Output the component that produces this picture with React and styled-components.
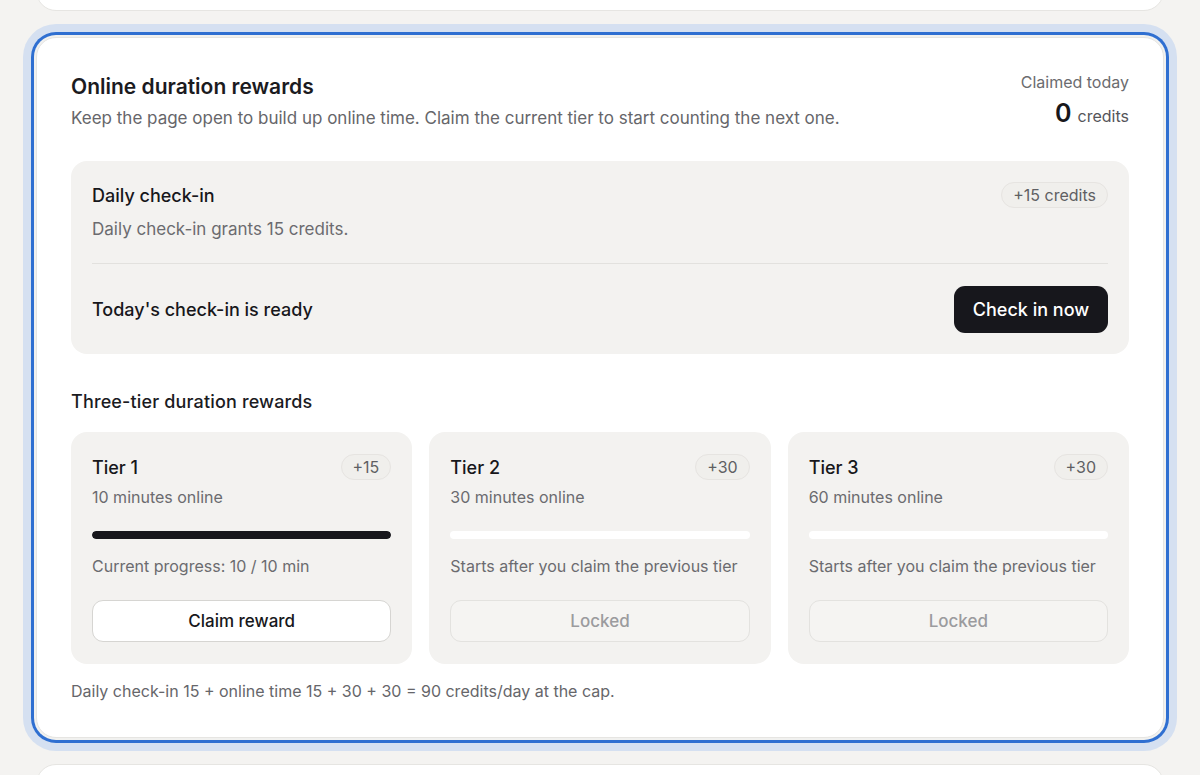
import React from 'react'
import styled, { createGlobalStyle } from 'styled-components'

const GlobalStyle = createGlobalStyle`
  body {
    margin: 0;
    background: #f4f3f1;
    font-family: Inter, "Noto Sans", "Liberation Sans", sans-serif;
    color: #1b1b1f;
    -webkit-font-smoothing: antialiased;
  }
`

const Page = styled.div`
  display: flex;
  flex-direction: column;
  gap: 26px;
  padding: 0 36px;
  overflow: hidden;
  height: 775px;
  box-sizing: border-box;
`

const GhostCard = styled.div`
  flex: none;
  height: 40px;
  margin-top: ${props => props.top ? '-31px' : '0'};
  background: #fff;
  border: 1px solid #e6e5e2;
  border-radius: 20px;
`

const Card = styled.section`
  flex: none;
  background: #fff;
  border: 1px solid #e6e5e2;
  border-radius: 20px;
  padding: 35px 34px 35px;
  box-shadow: 0 0 0 2px #f1f1ef, 0 0 0 5px #2f6fd1, 0 0 0 13px #d5e0f1;
`

const Header = styled.div`
  display: flex;
  justify-content: space-between;
  align-items: flex-start;
`

const Title = styled.h2`
  margin: 0;
  font-size: 21px;
  line-height: 28px;
  font-weight: 600;
`

const Subtitle = styled.p`
  margin: 5px 0 0;
  font-size: 17px;
  line-height: 24px;
  color: #66666a;
`

const Claimed = styled.div`
  text-align: right;
  margin-top: -2px;
`

const ClaimedLabel = styled.div`
  font-size: 16px;
  line-height: 22px;
  color: #6b6b6f;
`

const ClaimedValue = styled.div`
  margin-top: 6px;
  font-size: 16px;
  line-height: 28px;
  color: #55555a;
  b {
    font-size: 25px;
    font-weight: 600;
    color: #17171b;
    margin-right: 6px;
  }
`

const Panel = styled.div`
  margin-top: 31px;
  background: #f3f2f0;
  border-radius: 16px;
  padding: 22px 21px 21px;
`

const Row = styled.div`
  display: flex;
  justify-content: space-between;
  align-items: ${props => props.center ? 'center' : 'flex-start'};
`

const Name = styled.div`
  font-size: 18px;
  line-height: 26px;
  font-weight: 500;
  color: #17171b;
`

const Muted = styled.div`
  margin-top: ${props => props.gap || 0}px;
  font-size: ${props => props.large ? 17 : 16}px;
  line-height: 24px;
  color: #6b6b6f;
  white-space: nowrap;
`

const Badge = styled.span`
  display: inline-flex;
  align-items: center;
  height: 24px;
  padding: 0 11px;
  margin-top: ${props => props.offset || 0}px;
  border: 1px solid #e6e4e1;
  border-radius: 999px;
  background: #f0efec;
  font-size: 16px;
  color: #5f5f63;
`

const Divider = styled.hr`
  margin: 22px 0;
  border: none;
  border-top: 1px solid #e2e1de;
`

const DarkButton = styled.button`
  height: 47px;
  width: 154px;
  border: none;
  border-radius: 11px;
  background: #17171c;
  color: #fff;
  font-family: inherit;
  font-size: 18px;
  font-weight: 500;
`

const SectionTitle = styled.h3`
  margin: 35px 0 17px;
  font-size: 18px;
  line-height: 26px;
  font-weight: 500;
  letter-spacing: 0.15px;
`

const Tiers = styled.div`
  display: grid;
  grid-template-columns: repeat(3, 1fr);
  gap: 17px;
`

const Tier = styled.div`
  background: #f3f2f0;
  border-radius: 16px;
  padding: 23px 21px 22px;
`

const Track = styled.div`
  margin-top: 22px;
  height: 8px;
  border-radius: 4px;
  background: #fff;
  overflow: hidden;
`

const Fill = styled.div`
  height: 100%;
  border-radius: 4px;
  background: #17171c;
`

const TierButton = styled.button`
  margin-top: 22px;
  width: 100%;
  height: 42px;
  border-radius: 11px;
  font-family: inherit;
  font-size: 17px;
  font-weight: 500;
  border: 1px solid ${props => props.locked ? '#e3e2df' : '#d6d5d2'};
  background: ${props => props.locked ? '#f5f4f2' : '#fff'};
  color: ${props => props.locked ? '#9b9b9e' : '#17171b'};
`

const Footnote = styled.p`
  margin: 16px 0 0;
  font-size: 16px;
  line-height: 22px;
  color: #66666a;
`

const tiers = [
  { name: 'Tier 1', reward: 15, minutes: 10, progress: 10, claimable: true },
  { name: 'Tier 2', reward: 30, minutes: 30, progress: 0 },
  { name: 'Tier 3', reward: 30, minutes: 60, progress: 0 },
]

const App = () => {
  return (
    <>
      <GlobalStyle />
      <Page>
        <GhostCard top />
        <Card>
          <Header>
            <div>
              <Title>Online duration rewards</Title>
              <Subtitle>Keep the page open to build up online time. Claim the current tier to start counting the next one.</Subtitle>
            </div>
            <Claimed>
              <ClaimedLabel>Claimed today</ClaimedLabel>
              <ClaimedValue><b>0</b>credits</ClaimedValue>
            </Claimed>
          </Header>

          <Panel>
            <Row>
              <div>
                <Name>Daily check-in</Name>
                <Muted large gap={8}>Daily check-in grants 15 credits.</Muted>
              </div>
              <Badge offset={-1}>+15 credits</Badge>
            </Row>
            <Divider />
            <Row center>
              <Name>Today's check-in is ready</Name>
              <DarkButton>Check in now</DarkButton>
            </Row>
          </Panel>

          <SectionTitle>Three-tier duration rewards</SectionTitle>
          <Tiers>
            {tiers.map((tier) => (
              <Tier key={tier.name}>
                <Row>
                  <Name>{tier.name}</Name>
                  <Badge offset={-1}>+{tier.reward}</Badge>
                </Row>
                <Muted gap={4}>{tier.minutes} minutes online</Muted>
                <Track>
                  {tier.progress > 0 && (
                    <Fill style={{ width: `${(tier.progress / tier.minutes) * 100}%` }} />
                  )}
                </Track>
                <Muted gap={15}>
                  {tier.claimable
                    ? `Current progress: ${tier.progress} / ${tier.minutes} min`
                    : 'Starts after you claim the previous tier'}
                </Muted>
                <TierButton locked={!tier.claimable}>
                  {tier.claimable ? 'Claim reward' : 'Locked'}
                </TierButton>
              </Tier>
            ))}
          </Tiers>

          <Footnote>Daily check-in 15 + online time 15 + 30 + 30 = 90 credits/day at the cap.</Footnote>
        </Card>
        <GhostCard />
      </Page>
    </>
  )
}

export default App
